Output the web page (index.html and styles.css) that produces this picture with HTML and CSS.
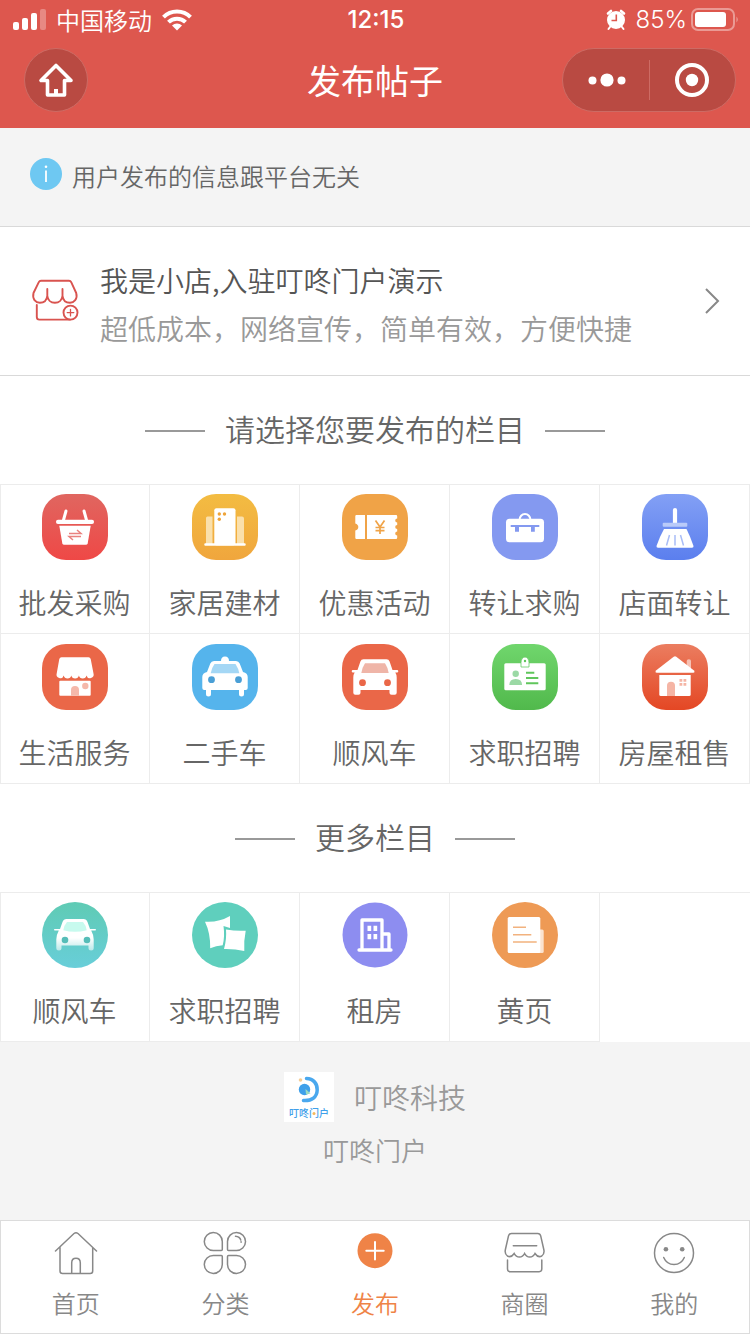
FILE: index.html
```html
<!DOCTYPE html>
<html lang="zh-CN">
<head>
<meta charset="utf-8">
<meta name="viewport" content="width=device-width, initial-scale=1">
<title>发布帖子</title>
<link rel="stylesheet" href="styles.css">
</head>
<body>
<header class="header">
  <div class="status">
    <div class="status-side">
      <svg width="33" height="22" viewBox="0 0 33 22" fill="#fff"><rect x="0" y="13" width="6" height="8" rx="2"/><rect x="9" y="9" width="6" height="12" rx="2"/><rect x="18" y="4" width="6" height="17" rx="2"/><rect x="27" y="0" width="6" height="21" rx="2" opacity=".3"/></svg>
      <span>中国移动</span>
      <svg width="30" height="22" viewBox="0 0 30 22" fill="none" stroke="#fff" stroke-width="4"><path d="M1.500 8.200a19 19 0 0 1 27 0M6.500 13.200a12 12 0 0 1 17 0"/><path d="M10 16.500a7.100 7.100 0 0 1 10 0L15 21.500z" fill="#fff" stroke="none"/></svg>
    </div>
    <time class="clock">12:15</time>
    <div class="status-side status-end">
      <svg width="20" height="22" viewBox="0 0 20 22"><circle cx="10" cy="11" r="9" fill="#fff"/><path d="M2 4.500 5 2M18 4.500 15 2" stroke="#fff" stroke-width="2.600" stroke-linecap="round"/><path d="M4 18l-1.500 2M16 18l1.500 2" stroke="#fff" stroke-width="2" stroke-linecap="round"/><path d="M10.300 5.500v6H5.500" fill="none" stroke="#dd574e" stroke-width="1.600"/></svg>
      <span class="percent">85%</span>
      <svg width="48" height="24" viewBox="0 0 48 24"><rect x="1" y="1" width="42" height="21" rx="6" fill="none" stroke="#fff" stroke-opacity=".4" stroke-width="2"/><rect x="4" y="4" width="31" height="15" rx="3" fill="#fff"/><path d="M45.500 8.500q2.500 3 0 6z" fill="#fff" opacity=".45"/></svg>
    </div>
  </div>
  <div class="nav">
    <button class="home" type="button" aria-label="首页"><svg width="36" height="36" viewBox="0 0 36 36" fill="none" stroke="#fff" stroke-width="3.600" stroke-linejoin="round"><path d="M18 3.500 3 18.500h6.500V33h17V18.500H33z"/><path d="M18 27v6" stroke-width="4"/></svg></button>
    <h1 class="title">发布帖子</h1>
    <div class="capsule">
      <button type="button" aria-label="更多"><svg width="40" height="36" viewBox="0 0 40 36" fill="#fff"><circle cx="6.500" cy="18.500" r="4"/><circle cx="21" cy="18" r="6.600"/><circle cx="35.500" cy="18.500" r="4"/></svg></button>
      <button type="button" aria-label="关闭"><svg width="36" height="36" viewBox="0 0 36 36"><circle cx="18" cy="18" r="15" fill="none" stroke="#fff" stroke-width="4"/><circle cx="18" cy="18" r="6.200" fill="#fff"/></svg></button>
    </div>
  </div>
</header>

<main class="main">
  <p class="notice">
    <svg width="32" height="32" viewBox="0 0 32 32"><circle cx="16" cy="16" r="16" fill="#6ec8f2"/><path d="M16 12.500V24" stroke="#fff" stroke-width="1.800"/><circle cx="16" cy="8.800" r="1.300" fill="#fff"/></svg>
    <span>用户发布的信息跟平台无关</span>
  </p>

  <a class="store" href="#store">
    <svg width="50" height="50" viewBox="0 0 50 50" fill="none" stroke="#d9534f" stroke-width="1.900" stroke-linecap="round" stroke-linejoin="round"><path d="M11 4.700h28q1.500 0 2.200 1.500l5 10.800q1.200 4-1 7.200-2 2.600-5.200 2.600c-4.300 0-7-3-7.500-7-.5 4-3.300 7-7.600 7s-7.100-3-7.600-7c-.5 4-3.200 7-7.500 7q-3.300 0-5.300-2.600-2-3.200-1-7.200L8.800 6.200q.7-1.500 2.200-1.500zM17.300 13v7M32.500 13v7M6.800 29v12q0 2.600 2.600 2.600H40"/><circle cx="40.500" cy="36.600" r="7"/><path d="M40.500 33.300v6.600M37.200 36.600h6.600" stroke-width="1.300"/></svg>
    <span class="store-text"><strong>我是小店,入驻叮咚门户演示</strong><span>超低成本，网络宣传，简单有效，方便快捷</span></span>
    <svg width="16" height="28" viewBox="0 0 16 28" fill="none" stroke="#888" stroke-width="2"><path d="m2 2 12 12L2 26"/></svg>
  </a>

  <h2 class="section-title">请选择您要发布的栏目</h2>
  <nav class="grid" aria-label="栏目">
    <a class="cell" href="#c1"><svg viewBox="0 0 66 66"><defs><linearGradient id="g1" x2="0" y2="1"><stop stop-color="#e06660"/><stop offset="1" stop-color="#ef4846"/></linearGradient></defs><rect width="66" height="66" rx="24" fill="url(#g1)"/><path d="M24.500 17 22 26M42.500 17 45 26" transform="translate(-.5 0)" stroke="#fff" stroke-width="3" stroke-linecap="round"/><rect x="14" y="25.700" width="38" height="4.300" rx="2" fill="#fff"/><path d="M17.300 31.700h31.400l-3 17.500q-.3 1.500-2 1.500H22.300q-1.700 0-2-1.500z" fill="#fff"/><path d="M27 39.500h12l-4-3.500M39 42.500H27l4 3.500" fill="none" stroke="#e9817e" stroke-width="1.500"/></svg><span>批发采购</span></a>
    <a class="cell" href="#c2"><svg viewBox="0 0 66 66"><defs><linearGradient id="g2" x2="0" y2="1"><stop stop-color="#f3bc42"/><stop offset="1" stop-color="#f0a63d"/></linearGradient></defs><rect width="66" height="66" rx="24" fill="url(#g2)"/><path d="M14 24q0-1.500 1.500-1.500h5V50H14zM45 22.500h5q2 0 2 2V50h-7z" fill="#fae0ac"/><rect x="22.300" y="14.300" width="21.200" height="37" rx="2" fill="#fff"/><rect x="12.300" y="49.300" width="41.400" height="2.400" rx="1" fill="#fff"/><g fill="#eea43a"><circle cx="27.300" cy="20" r="1.700"/><circle cx="32.500" cy="20" r="1.700"/><circle cx="27.300" cy="25.200" r="1.700"/></g></svg><span>家居建材</span></a>
    <a class="cell" href="#c3"><svg viewBox="0 0 66 66"><rect width="66" height="66" rx="24" fill="#f0a347"/><path d="M14.500 21H23v24h-8.500q-1.200 0-1.200-1.200V36.500q3-1 3-3.500t-3-3.500v-7.300q0-1.200 1.200-1.200zM25 21h29q1.200 0 1.200 1.200v2.300a2 2 0 0 0 0 4v2.500a2 2 0 0 0 0 4v2.500a2 2 0 0 0 0 4v2.300q0 1.200-1.200 1.200H25z" fill="#fff"/><path d="m33.500 26.500 4.500 6.500 4.500-6.500M38 33v7M33.500 33.500h9M33.500 36.700h9" fill="none" stroke="#f0a347" stroke-width="1.700"/></svg><span>优惠活动</span></a>
    <a class="cell" href="#c4"><svg viewBox="0 0 66 66"><rect width="66" height="66" rx="24" fill="#8499f0"/><path d="M27.500 26a5.500 6 0 0 1 11 0" fill="none" stroke="#fff" stroke-width="2"/><rect x="14" y="24.700" width="38" height="23.500" rx="3.500" fill="#fff"/><path d="M18.700 31h28.600v2h-4.500v4.700H39V33H27v4.700h-4V33h-4.300z" fill="#8499f0"/></svg><span>转让求购</span></a>
    <a class="cell" href="#c5"><svg viewBox="0 0 66 66"><defs><linearGradient id="g5" x2="0" y2="1"><stop stop-color="#83a0f5"/><stop offset="1" stop-color="#5b7fee"/></linearGradient></defs><rect width="66" height="66" rx="24" fill="url(#g5)"/><path d="M30.900 29V16q0-2 2.100-2t2.100 2v13z" fill="#fff"/><rect x="20.700" y="28.700" width="24.600" height="4" rx="1" fill="#b9caf9"/><path d="M22 35h22.500q4 8 7 17 .3 1.700-1.500 1.700H16q-1.800 0-1.500-1.700 3-9 7.500-17z" fill="#fff"/><path d="m27.500 41-3 10.500M33 41v10.500M38.500 41l3 10.500" stroke="#a9bdf7" stroke-width="1.500"/></svg><span>店面转让</span></a>
    <a class="cell" href="#c6"><svg viewBox="0 0 66 66"><rect width="66" height="66" rx="24" fill="#ea6748"/><path d="M19.500 13.300h27q1.700 0 2.200 1.700l2.800 14.500a3.600 3.600 0 0 1-7 2 3.900 3.900 0 0 1-7.600 0 3.900 3.900 0 0 1-7.600 0 3.900 3.900 0 0 1-7.600 0 3.600 3.600 0 0 1-7-2L17.300 15q.5-1.700 2.200-1.700z" fill="#fff"/><rect x="17.300" y="36.700" width="31.400" height="15" rx="1" fill="#fff"/><path d="M29 51.700V46q0-4 4-4t4 4v5.700z" fill="#f5b8aa"/><circle cx="43.300" cy="42" r="3.200" fill="#f5b8aa"/></svg><span>生活服务</span></a>
    <a class="cell" href="#c7"><svg viewBox="0 0 66 66"><rect width="66" height="66" rx="24" fill="#55b4ec"/><path d="M29 17q0-4.500 4-4.500t4 4.500h7q2.700 0 3.700 2.500L51 28q4.700 1 4.700 5v11q0 2-2 2H52v4q0 2.500-2.500 2.500T47 50v-4H19v4q0 2.500-2.500 2.500T14 50v-4h-1.700q-2 0-2-2V33q0-4 4.700-5l3.300-8.500Q19.300 17 22 17z" fill="#fff"/><path d="M22.500 20h21q3 4.500 3.800 9.300H18.700Q19.500 24 22.500 20z" fill="#a4d7f5"/><circle cx="19.500" cy="35.700" r="3.400" fill="#4a9fd6"/><circle cx="46.500" cy="35.700" r="3.400" fill="#4a9fd6"/></svg><span>二手车</span></a>
    <a class="cell" href="#c8"><svg viewBox="0 0 66 66"><rect width="66" height="66" rx="24" fill="#ea6748"/><path d="M21.500 15.300h23q2.300 0 3.100 2.300L50.500 26H55q1.300 0 1.300 1.300t-1.300 1.300h-1.700q1.400 2 1.400 5v15.200q0 2-2 2h-3.200q-2 0-2-2V46h-29v2.800q0 2-2 2h-3.200q-2 0-2-2V33.600q0-3 1.400-5H11q-1.300 0-1.300-1.300T11 26h4.500l2.900-8.400q.8-2.300 3.100-2.300z" fill="#fff"/><path d="M23 19.300h20q3 4.500 3.700 9.700H19.300Q20 23.800 23 19.300z" fill="#efb5a8"/><circle cx="20.500" cy="38.700" r="3.400" fill="#ea6748"/><circle cx="45.500" cy="38.700" r="3.400" fill="#ea6748"/></svg><span>顺风车</span></a>
    <a class="cell" href="#c9"><svg viewBox="0 0 66 66"><defs><linearGradient id="g9" x2="0" y2="1"><stop stop-color="#70d66d"/><stop offset="1" stop-color="#51b94c"/></linearGradient></defs><rect width="66" height="66" rx="24" fill="url(#g9)"/><rect x="12.300" y="19.300" width="41.400" height="27" rx="1.500" fill="#fff"/><path d="M29 23v-4.500a4 5.500 0 0 1 8 0V23z" fill="#fff" stroke="#68cc64" stroke-width=".8"/><circle cx="33" cy="17" r="1.200" fill="#60c65c"/><g fill="#9bd9a5"><circle cx="23.700" cy="29.700" r="3.200"/><path d="M17.300 41q0-6 6.400-6t6.400 6z"/></g><path d="M34 28.700h8.300M34 34h12.300M34 39.200h12.300" stroke="#60c65c" stroke-width="2"/></svg><span>求职招聘</span></a>
    <a class="cell" href="#c10"><svg viewBox="0 0 66 66"><defs><linearGradient id="g10" x2="0" y2="1"><stop stop-color="#eb7d60"/><stop offset="1" stop-color="#e44724"/></linearGradient></defs><rect width="66" height="66" rx="24" fill="url(#g10)"/><path d="M44.700 25v-8q0-1.700 2.200-1.700T49 17v9z" fill="#f6c1b3"/><path d="M31.700 12.700q1.300-1 2.600 0L52 26.500q1.300 2.200-.8 2.200H14.800q-2.100 0-.8-2.200z" fill="#fff"/><path d="M17.300 31h31.400v19.500q0 1.500-1.500 1.500H18.800q-1.500 0-1.500-1.500z" fill="#fff"/><path d="M25 52V41.500q0-3.800 4-3.800t4 3.800V52z" fill="#f5b5a5"/><path d="M37.500 35h2.800v2.800h-2.800zM41.500 35h2.800v2.800h-2.800zM37.500 39h2.800v2.800h-2.800zM41.500 39h2.800v2.800h-2.800z" fill="#f5b5a5"/></svg><span>房屋租售</span></a>
  </nav>

  <h2 class="section-title">更多栏目</h2>
  <nav class="grid" aria-label="更多栏目">
    <a class="cell" href="#m1"><svg viewBox="0 0 66 66"><defs><linearGradient id="h1" x2="0" y2="1"><stop stop-color="#5fcbb4"/><stop offset="1" stop-color="#68ced9"/></linearGradient><linearGradient id="h2" x2="0" y2="1"><stop offset=".6" stop-color="#fff"/><stop offset="1" stop-color="#fff" stop-opacity=".55"/></linearGradient></defs><circle cx="33" cy="33" r="33" fill="url(#h1)"/><path d="M24.500 17h17q3 0 4 3l2.500 7h5.200q.8 0 .8.800t-.8.800h-4q2.500 4.500 2.500 9v8.500q0 2.500-2.600 2.500t-2.600-2.500V43.500h-27v2.600q0 2.500-2.600 2.500t-2.600-2.500v-8.500q0-4.500 2.500-9h-4q-.8 0-.8-.8t.8-.8H18l2.500-7q1-3 4-3z" fill="url(#h2)"/><path d="M25 20h16q3.500 4 3.700 8.300-11.700 3-23.400 0Q21.500 24 25 20z" fill="#c7faee"/><circle cx="23" cy="38" r="3.300" fill="#56bdb8"/><circle cx="45" cy="38" r="3.300" fill="#56bdb8"/></svg><span>顺风车</span></a>
    <a class="cell" href="#m2"><svg viewBox="0 0 66 66"><circle cx="33" cy="33" r="33" fill="#5fcfbd"/><path d="M13 19.700q13.500 1 25-5.700v12l-6.500-2q1.500 10.500-.8 19.200-6.700.3-12.500 3Q18.500 31 13 19.700z" fill="#fff"/><path d="M34 27.500q10 1.800 19.700 1.200-2 9.800-1.400 20.300-10-2.300-20.300-2Q34.800 37 34 27.500z" fill="#fff"/></svg><span>求职招聘</span></a>
    <a class="cell" href="#m3"><svg viewBox="0 0 66 66"><circle cx="33" cy="33" r="32.500" fill="#8d8df0"/><path d="M20 48V18h20v30M41 32h6v16M17 48h32" fill="none" stroke="#fff" stroke-width="3.300" stroke-linecap="round" stroke-linejoin="round"/><path d="M25.500 23.700h3.700v5.200h-3.700zM31.500 23.700h3.700v5.200h-3.700zM25.500 32h3.700v5.200h-3.700zM31.500 32h3.700v5.200h-3.700z" fill="#fff"/></svg><span>租房</span></a>
    <a class="cell" href="#m4"><svg viewBox="0 0 66 66"><circle cx="33" cy="33" r="33" fill="#ee9a55"/><path d="M47 27.500h3.200q1.500 0 1.500 1.500v20.500q0 1.500-1.500 1.500H47z" fill="#fbe3cf"/><rect x="15.700" y="15" width="32.600" height="36" rx="1.500" fill="#fff"/><path d="M21 25.300h13M21 32.700h18.300M21 40h23.700" stroke="#f2b27e" stroke-width="1.500"/></svg><span>黄页</span></a>
  </nav>
</main>

<footer class="credit">
  <div class="brand">
    <svg width="50" height="50" viewBox="0 0 50 50"><rect width="50" height="50" fill="#fff"/><circle cx="20.500" cy="17.500" r="5.700" fill="#3fa0ea"/><path d="M22.500 6.500C29.500 6.500 33.500 12 33.200 18 33 25 28 29 19.500 28.500" fill="none" stroke="#4aa8ee" stroke-width="3.500" stroke-linecap="round"/><circle cx="16.500" cy="8" r="1.800" fill="#f5cd95"/><path d="m21.500 17 5 4.500-4.500 1z" fill="#9cdcc0"/><text class="logo-text" x="25" y="45" text-anchor="middle">叮咚门户</text><circle cx="30" cy="41.500" r="1.500" fill="#f5b85c"/></svg>
    <span>叮咚科技</span>
  </div>
  <p class="credit-name">叮咚门户</p>
</footer>

<nav class="tabs" aria-label="主导航">
  <a class="tab" href="#home"><svg viewBox="0 0 44 44"><path d="M1.500 20 20 2.500q2-1.500 4 0L42.500 20M6 16.500V40q0 2.500 2.500 2.500h27.700q2.500 0 2.500-2.500V16.500M17.700 42.500V32q0-4.700 4.300-4.700t4.300 4.700v10.500"/></svg><span>首页</span></a>
  <a class="tab" href="#category"><svg viewBox="0 0 44 44"><path d="M19.300 10.500v8q0 1-1 1h-7.800a9 9 0 1 1 8.800-9zM24.500 10.500v8q0 1 1 1h7.800a9 9 0 1 0-8.800-9zM19.300 33.500v-8q0-1-1-1h-7.800a9 9 0 1 0 8.800 9zM24.500 33.500v-8q0-1 1-1h7.800a9 9 0 1 1-8.800 9z"/><path d="M32.500 5.300q5.500.5 5.600 6" stroke-dasharray="7 1.500"/></svg><span>分类</span></a>
  <a class="tab tab-active" href="#publish" aria-current="page"><svg viewBox="0 0 44 44"><circle cx="22" cy="19.700" r="17.500" fill="#ef8347" stroke="none"/><path d="M22 11v17.400M13.300 19.700h17.400" stroke="#fff" stroke-width="2"/></svg><span>发布</span></a>
  <a class="tab" href="#shops"><svg viewBox="0 0 44 44"><path d="M8.500 2.500h26.200q2.400 0 3 2.400l3.100 13.600q1 4.500-2 6.500-3.800 2-6.800-2.500-1.800 3.500-5.200 3.500t-5.200-3.500q-1.800 3.500-5.200 3.500t-5.200-3.500Q8.200 27 4.400 25q-3-2-2-6.500L5.500 4.900q.6-2.400 3-2.400zM10.300 14.800h23.400M4.500 29v9q0 2.700 2.700 2.700h28.900q2.700 0 2.700-2.700v-9"/></svg><span>商圈</span></a>
  <a class="tab" href="#me"><svg viewBox="0 0 44 44"><circle cx="22" cy="22" r="19.500"/><path d="M11.700 26.500q3 7 10.300 7t10.300-7"/><g fill="#888" stroke="none"><circle cx="13.900" cy="18.300" r="2.300"/><circle cx="30.200" cy="18.300" r="2.300"/></g></svg><span>我的</span></a>
</nav>
</body>
</html>
```
FILE: styles.css
```css
* { box-sizing: border-box; }

body {
  display: flex;
  flex-direction: column;
  min-height: 100vh;
  margin: 0;
  background: #f4f4f4;
  color: #666;
  font-family: "Noto Sans CJK SC", sans-serif;
  font-size: 28px;
  font-weight: 350;
}

a { color: inherit; text-decoration: none; }
h1, h2, p { margin: 0; font-weight: inherit; }
svg { display: block; flex: none; }

/* header */
.header { padding-bottom: 8px; background: #dd574e; color: #fff; }

.status {
  display: grid;
  grid-template-columns: 1fr auto 1fr;
  align-items: center;
  height: 40px;
  padding: 0 11px 0 13px;
  font-size: 24px;
  line-height: 40px;
}
.status-side { display: flex; align-items: center; gap: 10px; }
.status-end { justify-content: flex-end; gap: 4px; }
.clock, .percent { font-family: Inter, "Noto Sans CJK SC", sans-serif; }
.clock { font-weight: 500; }
.percent { padding-left: 6px; }

.nav {
  display: grid;
  grid-template-columns: 1fr auto 1fr;
  align-items: center;
  height: 80px;
  padding: 0 14px;
}
.title { font-size: 34px; font-weight: 400; line-height: 48px; }
.home, .capsule {
  height: 64px;
  border: 1px solid #cd6b64;
  border-radius: 32px;
  background: #b94a42;
}
.home {
  display: grid;
  place-items: center;
  width: 64px;
  margin-left: 10px;
  padding: 0;
}
.capsule {
  display: flex;
  align-items: center;
  justify-self: end;
  width: 174px;
}
.capsule button {
  display: grid;
  flex: 1;
  place-items: center;
  height: 40px;
  padding: 0;
  border: 0;
  background: none;
}
.capsule button + button { border-left: 1px solid #cd6b64; }

/* notice and store entry */
.main { background: #fff; }
.notice {
  display: flex;
  align-items: flex-start;
  gap: 10px;
  padding: 24px 30px 26px;
  border-bottom: 1px solid #d9d9d9;
  background: #f4f4f4;
  font-size: 24px;
  line-height: 48px;
}
.notice svg { margin-top: 6px; }
.store {
  display: flex;
  align-items: center;
  gap: 20px;
  padding: 23px 30px;
  border-bottom: 1px solid #d9d9d9;
}
.store-text {
  display: flex;
  flex: 1;
  flex-direction: column;
  padding-top: 6px;
  color: #999;
  line-height: 48px;
}
.store-text strong { color: #555; font-weight: inherit; }

/* category grids */
.section-title {
  display: flex;
  align-items: center;
  justify-content: center;
  gap: 20px;
  height: 108px;
  padding-bottom: 4px;
  font-size: 30px;
}
.section-title::before, .section-title::after {
  width: 60px;
  height: 2px;
  margin-top: 6px;
  background: #999;
  content: "";
}
.grid {
  display: grid;
  grid-template-columns: repeat(5, 1fr);
  box-shadow: inset 1px 1px #ececec;
}
.cell {
  display: flex;
  flex-direction: column;
  align-items: center;
  gap: 22px;
  padding: 10px 0 11px;
  border: solid #ececec;
  border-width: 0 1px 1px 0;
  line-height: 40px;
}
.cell svg { width: 66px; height: 66px; }

/* credit */
.credit { padding: 30px 0; color: #999; text-align: center; }
.brand { display: flex; align-items: center; justify-content: center; gap: 20px; line-height: 50px; }
.credit-name { margin-top: 8px; font-size: 26px; line-height: 40px; }
.logo-text { fill: #3fa0ea; font-size: 10px; font-weight: 500; }

/* bottom tabs */
.tabs {
  position: sticky;
  bottom: 0;
  display: grid;
  grid-template-columns: repeat(5, 1fr);
  margin-top: auto;
  border: 1px solid #dcdcdc;
  background: #fff;
  color: #888;
  font-size: 24px;
}
.tab {
  display: flex;
  flex-direction: column;
  align-items: center;
  gap: 8px;
  padding: 10px 0;
  line-height: 40px;
}
.tab svg {
  width: 44px;
  height: 44px;
  fill: none;
  stroke: #888;
  stroke-width: 1.5;
  stroke-linecap: round;
}
.tab-active { color: #ef8347; }
```
